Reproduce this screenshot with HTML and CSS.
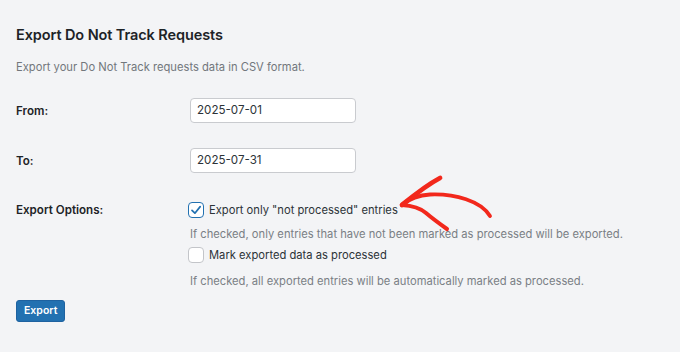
FILE: index.html
```html
<!DOCTYPE html>
<html lang="en">
<head>
<meta charset="utf-8">
<title>Export Do Not Track Requests</title>
<link rel="stylesheet" href="styles.css">
</head>
<body>
<div class="page">
  <h2 class="title">Export Do Not Track Requests</h2>
  <p class="intro">Export your Do Not Track requests data in CSV format.</p>
  <div class="form">
    <div class="row">
      <div class="label">From:</div>
      <div class="field"><div class="input">2025-07-01</div></div>
    </div>
    <div class="row">
      <div class="label">To:</div>
      <div class="field"><div class="input">2025-07-31</div></div>
    </div>
    <div class="row options">
      <div class="label opt-label">Export Options:</div>
      <div class="field column">
        <div class="check-line">
          <span class="box checked">
            <svg viewBox="0 0 16 16" width="16" height="16"><path d="M4 8.3 L6.9 11.2 L12.2 4.6" fill="none" stroke="#2271b1" stroke-width="1.7" stroke-linecap="round" stroke-linejoin="round"/></svg>
          </span>
          <span class="check-text">Export only "not processed" entries</span>
        </div>
        <div class="help first">If checked, only entries that have not been marked as processed will be exported.</div>
        <div class="check-line">
          <span class="box"></span>
          <span class="check-text">Mark exported data as processed</span>
        </div>
        <div class="help second">If checked, all exported entries will be automatically marked as processed.</div>
      </div>
    </div>
  </div>
  <div class="actions"><span class="button">Export</span></div>
  <svg class="arrow" viewBox="0 0 105 65" width="105" height="65">
    <g fill="none" stroke="#f2281c" stroke-linecap="round" stroke-linejoin="round">
      <path d="M7 35 C 18 26, 30 16, 45 8" stroke-width="4.8"/>
      <path d="M7 35 C 14 29, 24 25, 35 24.5 C 60 23.5, 86 31, 95 46" stroke-width="3.8"/>
      <path d="M7 35 C 15 35.5, 24 37, 31 43 C 38 49, 45 54, 52 59" stroke-width="4"/>
    </g>
  </svg>
</div>
</body>
</html>
```
FILE: styles.css
```css
* { box-sizing: border-box; }
html, body { margin: 0; padding: 0; }
body {
  background: #f3f4f6;
  width: 680px;
  height: 352px;
  overflow: hidden;
  font-family: Inter, "Noto Sans", "Liberation Sans", sans-serif;
  color: #1d2327;
}
.page {
  position: relative;
  padding: 25px 0 0 16px;
  height: 352px;
}
.title {
  margin: 0;
  font-size: 14.5px;
  line-height: 20px;
  font-weight: 600;
  letter-spacing: -0.1px;
}
.intro {
  margin: 13px 0 0;
  font-size: 11.2px;
  line-height: 18px;
  color: #72777c;
}
.form {
  margin-top: 22px;
  display: flex;
  flex-direction: column;
  gap: 25px;
}
.row {
  display: flex;
  align-items: center;
}
.row.options { align-items: flex-start; margin-top: 2px; }
.label {
  width: 172px;
  font-size: 11.6px;
  font-weight: 600;
  line-height: 20px;
}
.field { display: flex; }
.column { flex-direction: column; }
.input {
  margin-left: 2px;
  width: 166px;
  height: 25px;
  border: 1px solid #c9cbcf;
  border-radius: 4px;
  background: #fff;
  padding: 0 0 0 6px;
  font-size: 11.6px;
  line-height: 23px;
  color: #2c3338;
}
.check-line {
  display: flex;
  align-items: center;
  height: 20px;
  gap: 5px;
}
.box {
  width: 16px;
  height: 16px;
  border: 1px solid #c3c5c9;
  border-radius: 4px;
  background: #fff;
  display: flex;
}
.box svg { margin: -1px; }
.box.checked { border-color: #2271b1; }
.check-text {
  font-size: 11.2px;
  color: #2c3338;
}
.help {
  margin-left: 2px;
  font-size: 11.2px;
  line-height: 18px;
  color: #7a7f85;
}
.help.first { margin-top: 5px; margin-bottom: 2px; }
.help.second { margin-top: 7px; }
.actions { margin-top: 10px; display: flex; }
.button {
  display: inline-block;
  height: 22px;
  padding: 0 7px;
  background: #2271b1;
  border: 1px solid #1e62a0;
  border-radius: 3px;
  color: #fff;
  font-size: 10.5px;
  font-weight: 600;
  line-height: 20px;
}
.arrow {
  position: absolute;
  left: 395px;
  top: 170px;
}
```
